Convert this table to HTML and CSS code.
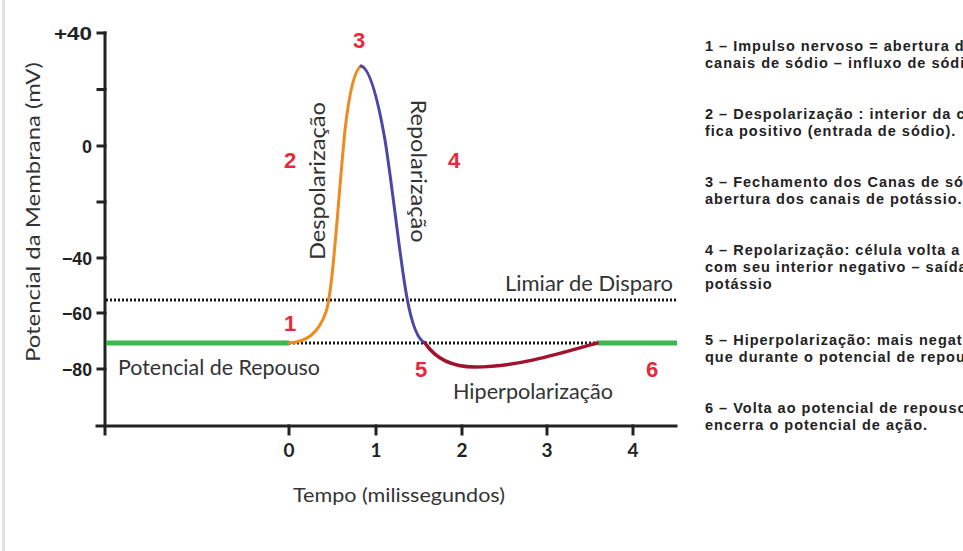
FILE: index.html
```html
<!DOCTYPE html>
<html lang="pt">
<head>
<meta charset="utf-8">
<title>Potencial de ação</title>
<link rel="stylesheet" href="styles.css">
</head>
<body>
<div class="page">
  <div class="stripe"></div>
  <svg class="chart" width="675" height="551" viewBox="5 0 675 551" xmlns="http://www.w3.org/2000/svg">
    <!-- axis title -->
    <text class="title" transform="translate(40 212) rotate(-90)" text-anchor="middle" textLength="300" lengthAdjust="spacingAndGlyphs">Potencial da Membrana (mV)</text>

    <!-- axes -->
    <g class="axis">
      <line x1="105" y1="33" x2="105" y2="434"/>
      <line x1="97" y1="426" x2="676" y2="426"/>
      <line x1="98" y1="33" x2="105" y2="33"/>
      <line x1="98" y1="89.5" x2="105" y2="89.5"/>
      <line x1="98" y1="146" x2="105" y2="146"/>
      <line x1="98" y1="202" x2="105" y2="202"/>
      <line x1="98" y1="258" x2="105" y2="258"/>
      <line x1="98" y1="313" x2="105" y2="313"/>
      <line x1="98" y1="369" x2="105" y2="369"/>
      <line x1="289" y1="426" x2="289" y2="434"/>
      <line x1="376" y1="426" x2="376" y2="434"/>
      <line x1="462" y1="426" x2="462" y2="434"/>
      <line x1="547" y1="426" x2="547" y2="434"/>
      <line x1="633" y1="426" x2="633" y2="434"/>
    </g>
    <g class="ytick" text-anchor="end">
      <text x="92" y="40" textLength="38" lengthAdjust="spacingAndGlyphs">+40</text>
      <text x="92" y="153">0</text>
      <text x="92" y="265" textLength="30" lengthAdjust="spacingAndGlyphs">−40</text>
      <text x="92" y="320" textLength="30" lengthAdjust="spacingAndGlyphs">−60</text>
      <text x="92" y="376" textLength="30" lengthAdjust="spacingAndGlyphs">−80</text>
    </g>
    <g class="xtick" text-anchor="middle">
      <text x="289" y="457">0</text>
      <text x="376" y="457">1</text>
      <text x="462" y="457">2</text>
      <text x="547" y="457">3</text>
      <text x="633" y="457">4</text>
    </g>
    <text class="title" x="399" y="502" text-anchor="middle" textLength="212" lengthAdjust="spacingAndGlyphs">Tempo (milissegundos)</text>

    <!-- reference lines -->
    <line class="dots" x1="106" y1="300" x2="676" y2="300"/>
    <line class="dots" x1="289" y1="343" x2="598" y2="343"/>
    <line class="rest" x1="106" y1="343" x2="289" y2="343"/>
    <line class="rest" x1="597" y1="343" x2="677" y2="343"/>

    <!-- curves -->
    <path class="c-orange" d="M289,343 C305,342 318,335 326,312 C333,290 338,200 345,130 C349,95 354,70 361,66"/>
    <path class="c-blue" d="M361,66 C370,68 378,100 385,140 C393,190 400,260 407,298 C412,325 418,340 425,343"/>
    <path class="c-red" d="M425,343 C435,358 450,367 475,367 C515,367 555,355 597,343"/>

    <!-- labels -->
    <text class="label" x="118" y="375" textLength="202" lengthAdjust="spacingAndGlyphs">Potencial de Repouso</text>
    <text class="label" x="505" y="291" textLength="168" lengthAdjust="spacingAndGlyphs">Limiar de Disparo</text>
    <text class="label" x="453" y="399" textLength="160" lengthAdjust="spacingAndGlyphs">Hiperpolarização</text>
    <text class="label" transform="translate(325 181) rotate(-90)" text-anchor="middle" textLength="158" lengthAdjust="spacingAndGlyphs">Despolarização</text>
    <text class="label" transform="translate(411 171) rotate(90)" text-anchor="middle" textLength="143" lengthAdjust="spacingAndGlyphs">Repolarização</text>

    <g class="num" text-anchor="middle">
      <text x="290" y="331">1</text>
      <text x="290" y="168">2</text>
      <text x="359" y="48">3</text>
      <text x="454" y="168">4</text>
      <text x="421" y="377">5</text>
      <text x="652" y="377">6</text>
    </g>
  </svg>
  <div class="notes">
    <p>1 – Impulso nervoso = abertura dos<br>canais de sódio – influxo de sódio.</p>
    <p>2 – Despolarização : interior da célula<br>fica positivo (entrada de sódio).</p>
    <p>3 – Fechamento dos Canas de sódio e<br>abertura dos canais de potássio.</p>
    <p class="long">4 – Repolarização: célula volta a ficar<br>com seu interior negativo – saída de<br>potássio</p>
    <p>5 – Hiperpolarização: mais negativo<br>que durante o potencial de repouso.</p>
    <p>6 – Volta ao potencial de repouso e<br>encerra o potencial de ação.</p>
  </div>
</div>
</body>
</html>
```

FILE: styles.css
```css
html, body {
  margin: 0;
  padding: 0;
  background: #fff;
  overflow: hidden;
}
.page {
  display: flex;
  width: 963px;
  height: 551px;
  overflow: hidden;
  padding-left: 2px;
  box-sizing: border-box;
}
.stripe {
  flex: 0 0 3px;
  background: #e2e2e2;
}
.chart {
  flex: 0 0 675px;
  display: block;
}
.axis line {
  stroke: #222;
  stroke-width: 3;
  stroke-linecap: square;
}
.ytick text {
  font-family: "Liberation Sans", Arial, sans-serif;
  font-weight: bold;
  font-size: 18px;
  fill: #222;
}
.xtick text {
  font-family: Lato, "Open Sans", sans-serif;
  font-weight: bold;
  font-size: 19px;
  fill: #222;
}
.title {
  font-family: Lato, "Open Sans", sans-serif;
  font-size: 20px;
  fill: #333;
}
.label {
  font-family: Lato, "Open Sans", sans-serif;
  font-size: 20.5px;
  fill: #333;
}
.dots {
  stroke: #1a1a1a;
  stroke-width: 3;
  stroke-dasharray: 2 2;
}
.rest {
  stroke: #3fb64d;
  stroke-width: 5;
}
.c-orange, .c-blue, .c-red {
  fill: none;
  stroke-width: 3;
  stroke-linecap: round;
}
.c-orange { stroke: #ef8a1f; }
.c-blue { stroke: #4a48a6; }
.c-red { stroke: #a3122c; stroke-width: 3.5; }
.num text {
  font-family: "Liberation Sans", Arial, sans-serif;
  font-weight: bold;
  font-size: 22px;
  fill: #e8293c;
}
.notes {
  flex: 0 0 auto;
  padding: 38px 0 0 25px;
  font-family: "Liberation Sans", Arial, sans-serif;
  font-weight: 700;
  font-size: 14.5px;
  letter-spacing: 1px;
  line-height: 17px;
  color: #222;
  white-space: nowrap;
}
.notes p {
  margin: 0 0 34px 0;
}
.notes p.long {
  margin-bottom: 39px;
}
```
